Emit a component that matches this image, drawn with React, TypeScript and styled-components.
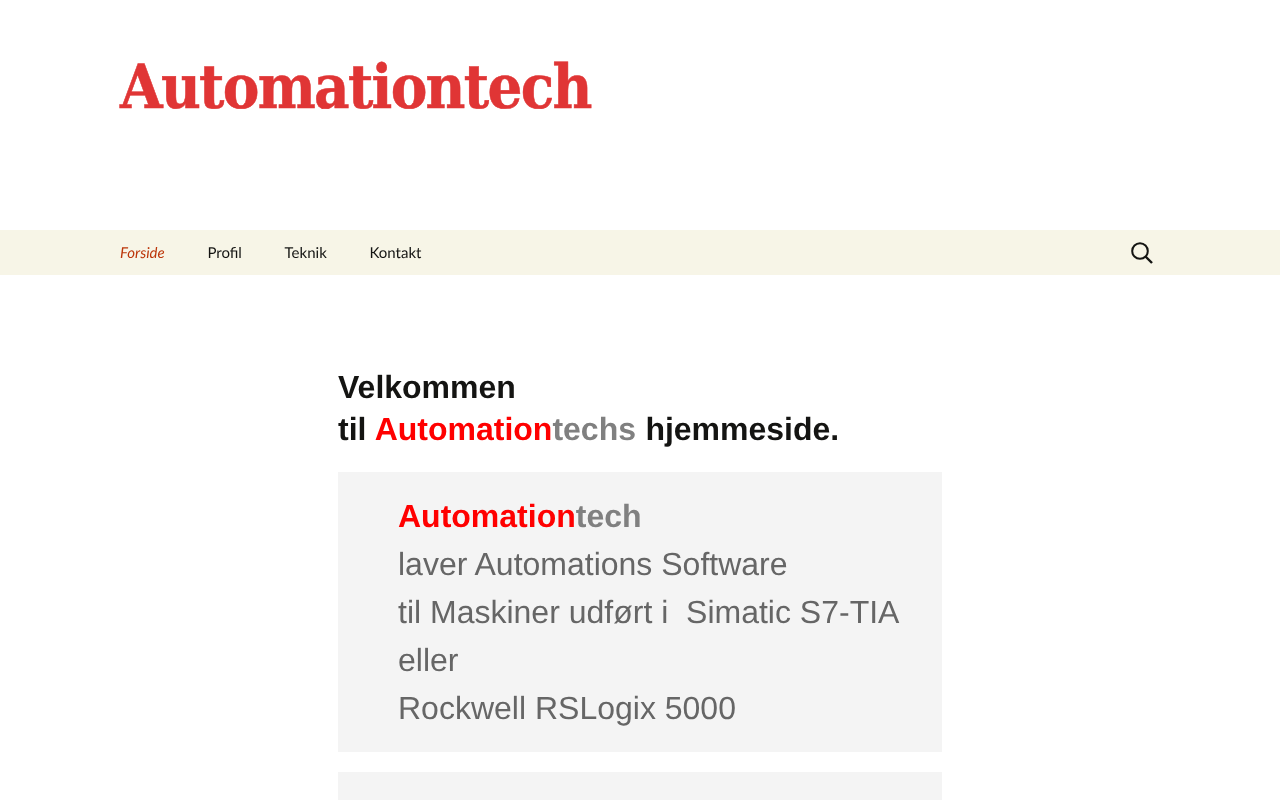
import * as React from "react";
import styled, { createGlobalStyle } from "styled-components";

const GlobalStyle = createGlobalStyle`
  html, body {
    margin: 0;
    padding: 0;
    height: 800px;
    overflow: hidden;
    background: #fff;
  }
`;

const Page = styled.div`
  height: 800px;
  overflow: hidden;
  font-family: "Liberation Sans", Arial, sans-serif;
  color: #141412;
  text-rendering: geometricPrecision;
  will-change: transform;
`;

const Masthead = styled.header`
  height: 230px;
  width: 1040px;
  margin: 0 auto;
  box-sizing: border-box;
  padding-top: 50px;
`;

const SiteTitle = styled.h1`
  margin: 0;
  font-family: "DejaVu Serif", serif;
  font-stretch: condensed;
  font-weight: 700;
  font-size: 61px;
  line-height: 76px;
  letter-spacing: -1.7px;
  -webkit-text-stroke: 0.5px #e03535;
  color: #e03535;
`;

const NavBar = styled.nav`
  height: 45px;
  background: #f7f5e7;
`;

const NavInner = styled.div`
  width: 1040px;
  height: 45px;
  margin: 0 auto;
  display: flex;
  align-items: center;
  justify-content: space-between;
`;

const NavList = styled.ul`
  display: flex;
  gap: 42.7px;
  margin: 0;
  padding: 1px 0 0;
  list-style: none;
`;

const NavLink = styled.a<{ $current?: boolean }>`
  font-family: Lato, sans-serif;
  font-size: 15px;
  line-height: 44px;
  color: ${(p) => (p.$current ? "#bc360a" : "#141412")};
  font-style: ${(p) => (p.$current ? "italic" : "normal")};
`;

const SearchButton = styled.span`
  display: flex;
  width: 24px;
  height: 24px;
  margin-right: 6px;
`;

const Content = styled.main`
  width: 604px;
  margin: 0 auto;
  padding-top: 91px;
`;

const Heading = styled.h2`
  margin: 0 0 22px;
  font-size: 32px;
  line-height: 42px;
  font-weight: 700;
  word-spacing: 0.5px;
  color: #141412;
`;

const Red = styled.span`
  color: #ff0000;
  font-weight: 700;
`;

const Grey = styled.span`
  color: #808080;
  font-weight: 700;
`;

const Quote = styled.div`
  background: #f4f4f4;
  padding: 20px 40px 20px 60px;
  margin-bottom: 20px;
  font-size: 32px;
  line-height: 48px;
  color: #666666;
`;

const App = () => (
  <Page>
    <GlobalStyle />
    <Masthead>
      <SiteTitle>Automationtech</SiteTitle>
    </Masthead>
    <NavBar>
      <NavInner>
        <NavList>
          <li><NavLink $current>Forside</NavLink></li>
          <li><NavLink>Profil</NavLink></li>
          <li><NavLink>Teknik</NavLink></li>
          <li><NavLink>Kontakt</NavLink></li>
        </NavList>
        <SearchButton>
          <svg width="24" height="24" viewBox="0 0 24 24" fill="none" stroke="#141412">
            <circle cx="10" cy="10" r="7.8" strokeWidth="2" />
            <path d="M15.5 15.5 L22 22" strokeWidth="2.4" />
          </svg>
        </SearchButton>
      </NavInner>
    </NavBar>
    <Content>
      <Heading>
        Velkommen
        <br />
        til <Red>Automation</Red><Grey>techs</Grey> hjemmeside.
      </Heading>
      <Quote>
        <Red>Automation</Red><Grey>tech</Grey>
        <br />
        laver Automations Software
        <br />
        til Maskiner udført i&nbsp; Simatic S7-TIA eller
        <br />
        Rockwell RSLogix 5000
      </Quote>
      <Quote />
    </Content>
  </Page>
);

export default App;
